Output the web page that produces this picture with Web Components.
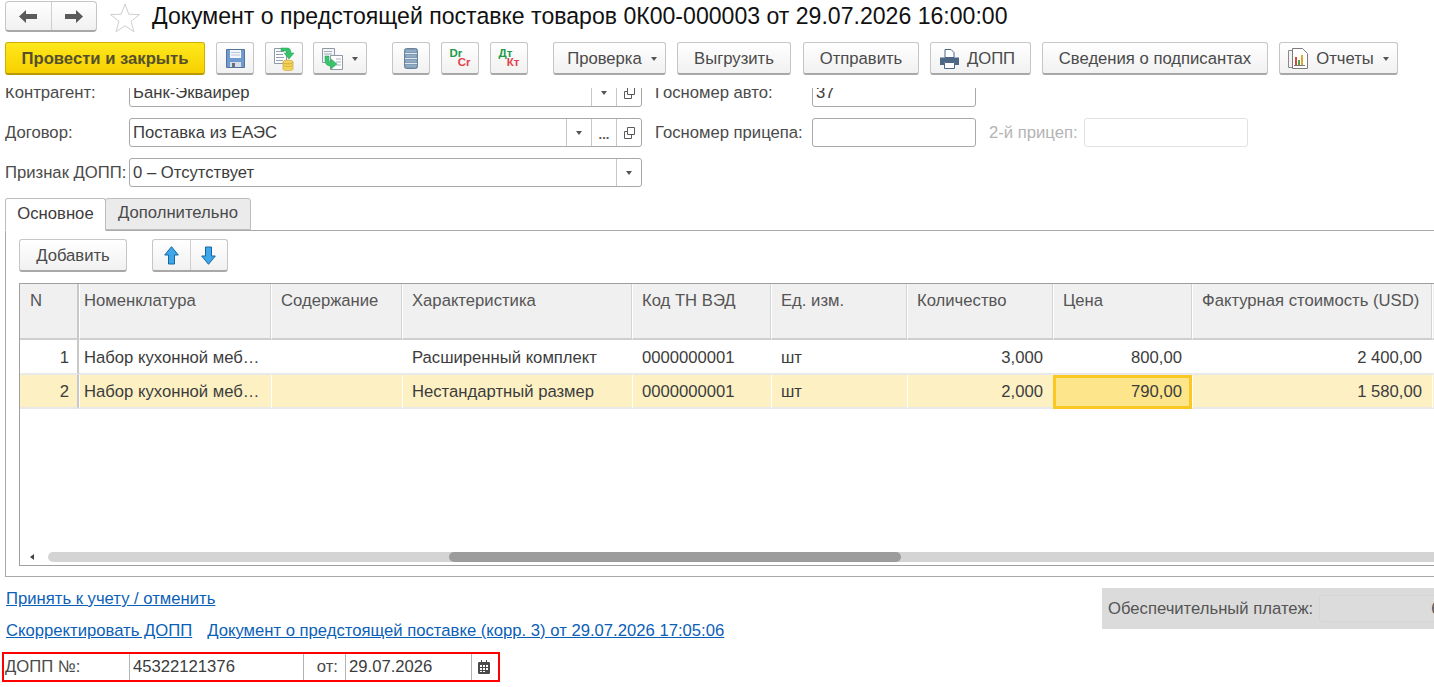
<!DOCTYPE html>
<html lang="ru">
<head>
<meta charset="utf-8">
<title>Документ о предстоящей поставке</title>
<style>
	html, body { margin: 0; background: #fff; overflow: hidden; }
	body { font: 16.67px "Liberation Sans", Arial, sans-serif; color: #4a4a4a; width: 1434px; height: 687px; }
</style>
</head>
<body>
<doc-header></doc-header>
<doc-form></doc-form>
<doc-panel></doc-panel>
<doc-footer></doc-footer>

<script>
const ICONS = {
	back: `<svg width="18" height="13" viewBox="0 0 18 13"><path fill="#5a5a5a" d="M0 6.5 7 0v4h11v5H7v4z"/></svg>`,
	forward: `<svg width="18" height="13" viewBox="0 0 18 13"><path fill="#5a5a5a" d="M18 6.5 11 0v4H0v5h11v4z"/></svg>`,
	star: `<svg width="30" height="29" viewBox="0 0 30 29"><path fill="#fff" stroke="#cfcfcf" d="M15 1l3.8 10.2 10.7.4-8.4 6.7 2.9 10.4L15 22.8l-9 5.9 2.9-10.4L.5 11.6l10.7-.4z"/></svg>`,
	save: `<svg width="19" height="19" viewBox="0 0 19 19"><path fill="#6f9bd0" stroke="#54739b" d="M.5.5h18v18H.5z"/><path fill="#f4f6f9" d="M4 1h11v8H4z"/><path fill="#b9c6d6" d="M5 3h9v1H5zM5 5.500h9v1H5z"/><path fill="#d7dde5" d="M4 13h11v5H4z"/><path fill="#5f6f84" d="M6 14h3v4H6z"/></svg>`,
	exportdb: `<svg width="21" height="24" viewBox="0 0 21 24"><path fill="#fff" stroke="#8f9aa6" d="M.5 1.500h12v15H.5z"/><path stroke="#93a0ae" d="M2 4.500h8M2 7.500h7M2 10.500h8M2 13.500h7"/><path fill="#35c46a" stroke="#21a053" stroke-width=".5" d="M7 1h6c3 0 4 2 4 5h3l-5 6-5-6h3c0-1-.5-2-2-2H7z"/><ellipse cx="14" cy="15" rx="5" ry="2" fill="#f4d35c" stroke="#c9a227" stroke-width=".6"/><path fill="#f4d35c" stroke="#c9a227" stroke-width=".6" d="M9 15v7c0 1 2 1.700 5 1.700s5-.7 5-1.700v-7c0 1-2 2-5 2s-5-1-5-2z"/><path stroke="#c9a227" fill="none" stroke-width=".6" d="M9 18c0 1 2 1.700 5 1.700s5-.7 5-1.700"/></svg>`,
	swap: `<svg width="21" height="22" viewBox="0 0 21 22"><path fill="#f3f5f7" stroke="#8f9aa6" d="M.5.500h12v14H.5z"/><path stroke="#a5afb9" d="M2 3.500h8M2 6h8"/><path fill="#fff" stroke="#8f9aa6" d="M8.500 7.500h12v14h-12z"/><path stroke="#a5afb9" d="M14 11h5M14 14h5M14 17h5"/><path fill="#3ac46e" stroke="#23a155" stroke-width=".5" d="M3 8h4v4c0 1 .5 1.500 2 1.500V11l6 5-6 5v-3c-4 0-6-2-6-6z"/></svg>`,
	db: `<svg width="14" height="21" viewBox="0 0 14 21"><rect x=".5" y=".5" width="13" height="20" rx="2" fill="#7f9bb7" stroke="#6b8299"/><path stroke="#dfe7ef" d="M1 5.500h12M1 10.500h12M1 15.500h12"/><path stroke="#a6bccf" d="M2 3h10M2 8h10M2 13h10M2 18h10"/></svg>`,
	printer: `<svg width="19" height="20" viewBox="0 0 19 20"><path fill="#fff" stroke="#4d6784" d="M5 .5h6l3 3v5H5z"/><path fill="#4d6784" d="M0 8.500h19V16h-4v-3H4v3H0z"/><path fill="#fff" stroke="#4d6784" d="M4.500 13.500h10v6h-10z"/></svg>`,
	report: `<svg width="20" height="21" viewBox="0 0 20 21"><path fill="#f2f2f2" stroke="#8b8b8b" d="M.5 2.500h4v17h-4z"/><path fill="#fff" stroke="#7b7b7b" d="M4.500.5h10l5 5v15h-15z"/><path fill="#d9483b" d="M7 9h2v8H7z"/><path fill="#47a64a" d="M10 12h2v5h-2z"/><path fill="#e0a92e" d="M13 7h2v10h-2z"/><path stroke="#777" d="M6 17.500h11"/></svg>`,
	up: `<svg width="15" height="19" viewBox="0 0 15 19"><path fill="#3ea6ea" stroke="#16679f" d="M7.500.7 14.300 9H10.500v9h-6V9H.7z"/></svg>`,
	down: `<svg width="15" height="19" viewBox="0 0 15 19"><path fill="#3ea6ea" stroke="#16679f" d="M7.500 18.300 14.300 10H10.500V1h-6v9H.7z"/></svg>`,
	open: `<svg width="11" height="12" viewBox="0 0 11 12"><path fill="none" stroke="#5a5a5a" d="M3.500.5h7v7h-7zM3.500 4.500h-3v7h7v-4"/></svg>`,
	cal: `<svg width="12" height="14" viewBox="0 0 12 14"><path fill="#4a4a4a" d="M1 2h2V0h1v2h4V0h1v2h2a1 1 0 0 1 1 1v10a1 1 0 0 1-1 1H1a1 1 0 0 1-1-1V3a1 1 0 0 1 1-1z"/><path fill="#fff" d="M2 5h2v2H2zM5 5h2v2H5zM8 5h2v2H8zM2 8h2v2H2zM5 8h2v2H5zM8 8h2v2H8zM2 11h2v1H2zM5 11h2v1H5z"/></svg>`,
};

const TRIANGLE = `<svg width="6" height="4" viewBox="0 0 6 4"><path fill="#555" d="M0 0h6L3 4z"/></svg>`;

class XIcon extends HTMLElement {
	constructor() {
		super();
		this.attachShadow({ mode: 'open' });
	}

	connectedCallback() {
		this.shadowRoot.innerHTML = `
			<style>
				:host { display: inline-flex; align-items: center; justify-content: center; }
				svg { display: block; }
			</style>
			${ICONS[this.getAttribute('name')] || ''}
		`;
	}
}

class XBtn extends HTMLElement {
	constructor() {
		super();
		this.attachShadow({ mode: 'open' });
	}

	connectedCallback() {
		const drop = this.hasAttribute('drop') ? `<span class="tri">${TRIANGLE}</span>` : '';
		this.shadowRoot.innerHTML = `
			<style>
				:host {
					display: inline-flex;
					align-items: center;
					justify-content: center;
					box-sizing: border-box;
					height: 33px;
					flex: none;
					border: 1px solid #c6c6c6;
					border-bottom: 2px solid #a8a8a8;
					border-radius: 3px;
					background: linear-gradient(#ffffff, #f1f1f1);
					color: #4a4a4a;
					gap: 8px;
					padding-top: 1px;
					white-space: nowrap;
				}
				:host([primary]) {
					border-color: #d2ae00;
					border-bottom-color: #b99a00;
					background: linear-gradient(#ffe81c, #f6d000);
					color: #55502a;
					font-weight: bold;
				}
				.tri { display: inline-flex; margin-left: 1px; }
			</style>
			<slot></slot>${drop}
		`;
	}
}

class XField extends HTMLElement {
	constructor() {
		super();
		this.attachShadow({ mode: 'open' });
	}

	connectedCallback() {
		const btns = (this.getAttribute('buttons') || '').split(' ').filter(Boolean).map(b => {
			if (b === 'drop') return `<span class="b">${TRIANGLE}</span>`;
			if (b === 'dots') return `<span class="b dots">...</span>`;
			return `<span class="b">${ICONS.open}</span>`;
		}).join('');
		this.shadowRoot.innerHTML = `
			<style>
				:host {
					display: flex;
					box-sizing: border-box;
					height: 29px;
					flex: none;
					border: 1px solid #a8a8a8;
					border-radius: 3px;
					background: #fff;
					color: #3c3c3c;
				}
				:host([disabled]) { border-color: #e2e2e2; }
				.v { flex: 1; padding-left: 3px; line-height: 27px; white-space: nowrap; overflow: hidden; }
				.b {
					width: 25px;
					flex: none;
					display: flex;
					align-items: center;
					justify-content: center;
					border-left: 1px solid #c8c8c8;
					box-sizing: border-box;
				}
				.dots { font-weight: bold; color: #555; font-size: 13px; padding-top: 4px; }
			</style>
			<div class="v"><slot></slot></div>${btns}
		`;
	}
}

class DocHeader extends HTMLElement {
	constructor() {
		super();
		this.attachShadow({ mode: 'open' });
		this.shadowRoot.innerHTML = `
			<style>
				:host { display: block; height: 88px; box-sizing: border-box; padding: 1px 0 0 5px; background: #fff; }
				.top { display: flex; align-items: center; height: 31px; }
				.nav {
					display: flex;
					box-sizing: border-box;
					width: 92px;
					height: 31px;
					border: 1px solid #c6c6c6;
					border-bottom: 2px solid #a8a8a8;
					border-radius: 4px;
					background: linear-gradient(#fff, #f1f1f1);
				}
				.nav x-icon { flex: 1; }
				.nav x-icon + x-icon { border-left: 1px solid #cfcfcf; }
				.star { margin-left: 13px; margin-top: 1px; }
				h1 { margin: 0 0 0 12px; font: normal 23.08px "Liberation Sans", Arial, sans-serif; color: #111; white-space: nowrap; }
				.bar { display: flex; margin-top: 10px; }
				.m25 { margin-left: 25px; }
				.m12 { margin-left: 12px; }
				.m11 { margin-left: 11px; }
				.m10 { margin-left: 10px; }
				.dc { display: flex; flex-direction: column; font: bold 11.5px/9px "Liberation Sans", Arial, sans-serif; width: 21px; margin-top: -2px; }
				.dc b:first-child { color: #1f9a4a; }
				.dc b:last-child { color: #e4404a; align-self: flex-end; }
			</style>
			<div class="top">
				<div class="nav"><x-icon name="back"></x-icon><x-icon name="forward"></x-icon></div>
				<x-icon class="star" name="star"></x-icon>
				<h1>Документ о предстоящей поставке товаров 0К00-000003 от 29.07.2026 16:00:00</h1>
			</div>
			<div class="bar">
				<x-btn primary style="width:200px">Провести и закрыть</x-btn>
				<x-btn class="m11" style="width:38px"><x-icon name="save"></x-icon></x-btn>
				<x-btn class="m11" style="width:38px"><x-icon name="exportdb"></x-icon></x-btn>
				<x-btn class="m10" drop style="width:54px"><x-icon name="swap"></x-icon></x-btn>
				<x-btn class="m25" style="width:38px"><x-icon name="db"></x-icon></x-btn>
				<x-btn class="m11" style="width:38px"><span class="dc"><b>Dr</b><b>Cr</b></span></x-btn>
				<x-btn class="m11" style="width:38px"><span class="dc"><b>Дт</b><b>Кт</b></span></x-btn>
				<x-btn class="m25" drop style="width:113px;padding-left:5px">Проверка</x-btn>
				<x-btn class="m11" style="width:114px">Выгрузить</x-btn>
				<x-btn class="m12" style="width:116px">Отправить</x-btn>
				<x-btn class="m11" style="width:101px;padding-right:6px"><x-icon name="printer"></x-icon>ДОПП</x-btn>
				<x-btn class="m11" style="width:226px">Сведения о подписантах</x-btn>
				<x-btn class="m11" drop style="width:119px"><x-icon name="report"></x-icon>Отчеты</x-btn>
			</div>
		`;
	}
}

class DocForm extends HTMLElement {
	constructor() {
		super();
		this.attachShadow({ mode: 'open' });
		this.shadowRoot.innerHTML = `
			<style>
				:host { display: block; padding-left: 5px; }
				.row { display: flex; align-items: center; height: 29px; margin-bottom: 11px; white-space: nowrap; }
				.clip { height: 19px; overflow: hidden; align-items: flex-end; }
				.l { width: 124px; flex: none; line-height: 28px; }
				.l2 { margin-left: 13px; width: 157px; flex: none; line-height: 28px; }
				.l3 { margin-left: 13px; width: 95px; flex: none; color: #b4b4b4; line-height: 28px; }
			</style>
			<div class="row clip">
				<span class="l">Контрагент:</span>
				<x-field buttons="drop open" style="width:513px">Банк-Эквайрер</x-field>
				<span class="l2">Госномер авто:</span>
				<x-field style="width:164px">37</x-field>
			</div>
			<div class="row">
				<span class="l">Договор:</span>
				<x-field buttons="drop dots open" style="width:513px">Поставка из ЕАЭС</x-field>
				<span class="l2">Госномер прицепа:</span>
				<x-field style="width:164px"></x-field>
				<span class="l3">2-й прицеп:</span>
				<x-field disabled style="width:164px"></x-field>
			</div>
			<div class="row">
				<span class="l">Признак ДОПП:</span>
				<x-field buttons="drop" style="width:513px">0 – Отсутствует</x-field>
			</div>
		`;
	}
}

class DocTable extends HTMLElement {
	constructor() {
		super();
		this.attachShadow({ mode: 'open' });
		const head = ['N', 'Номенклатура', 'Содержание', 'Характеристика', 'Код ТН ВЭД', 'Ед. изм.', 'Количество', 'Цена', 'Фактурная стоимость (USD)', ''];
		const rows = [
			['1', 'Набор кухонной меб…', '', 'Расширенный комплект', '0000000001', 'шт', '3,000', '800,00', '2 400,00', ''],
			['2', 'Набор кухонной меб…', '', 'Нестандартный размер', '0000000001', 'шт', '2,000', '790,00', '1 580,00', ''],
		];
		const right = [0, 6, 7, 8];
		const cell = (text, i, r) => {
			const cls = ['c'];
			if (i === 0) cls.push('first');
			if (i === 1) cls.push('name');
			if (right.includes(i)) cls.push('r');
			if (r === 0) cls.push('top');
			if (r === 1) cls.push('cur');
			if (r === 1 && i === 7) cls.push('sel');
			return `<div class="${cls.join(' ')}">${text}</div>`;
		};
		this.shadowRoot.innerHTML = `
			<style>
				:host {
					display: flex;
					flex-direction: column;
					box-sizing: border-box;
					height: 283px;
					margin-left: 13px;
					border: 1px solid #a0a0a0;
					border-right: 0;
					overflow: hidden;
					color: #3c3c3c;
				}
				.grid {
					display: grid;
					grid-template-columns: 59px 192px 131px 230px 139px 136px 146px 139px 240px 100px;
					grid-template-rows: 56px 35px 34px;
				}
				.h {
					background: #f0f0f0;
					color: #555;
					padding: 7px 0 0 9px;
					border-right: 1px solid #d4d4d4;
					border-left: 1px solid #fff;
					border-bottom: 2px solid #cfcfcf;
					box-sizing: border-box;
					white-space: nowrap;
				}
				.h.first { border-left: 0; border-right: 2px solid #c8c8c8; padding-left: 10px; }
				.h.name { padding-left: 4px; }
				.c {
					box-sizing: border-box;
					padding: 1px 10px 0;
					display: flex;
					align-items: center;
					border-bottom: 2px solid #e9e9e9;
					white-space: nowrap;
					overflow: hidden;
				}
				.c.top { padding-top: 3px; }
				.c.name { padding-left: 5px; }
				.c.first { border-right: 2px solid #c8c8c8; padding-right: 8px; }
				.c.r { justify-content: flex-end; }
				.c.cur { background: #fdf1c4; background-clip: padding-box; border-left: 1px solid #fff; padding-left: 9px; }
				.c.cur.name { padding-left: 4px; }
				.c.cur.first { border-left: 0; }
				.c.sel { background: #fde58c; outline: 3px solid #fbc722; outline-offset: -3px; }
				.rest { flex: 1; }
				.scroll { display: flex; align-items: center; height: 10px; margin-bottom: 3px; padding-left: 10px; }
				.arrow { width: 0; height: 0; border: 3px solid transparent; border-right: 4px solid #444; border-left: 0; margin-right: 14px; }
				.track { flex: 1; height: 10px; background: #d4d4d4; border-radius: 5px 0 0 5px; display: flex; }
				.thumb { width: 452px; margin-left: 401px; height: 10px; border-radius: 5px; background: #9c9c9c; }
			</style>
			<div class="grid">
				${head.map((t, i) => `<div class="h${i === 0 ? ' first' : ''}${i === 1 ? ' name' : ''}">${t}</div>`).join('')}
				${rows.map((row, r) => row.map((t, i) => cell(t, i, r)).join('')).join('')}
			</div>
			<div class="rest"></div>
			<div class="scroll"><span class="arrow"></span><div class="track"><div class="thumb"></div></div></div>
		`;
	}
}

class DocPanel extends HTMLElement {
	constructor() {
		super();
		this.attachShadow({ mode: 'open' });
		this.shadowRoot.innerHTML = `
			<style>
				:host { display: block; margin-left: 5px; }
				.tabs { display: flex; height: 33px; position: relative; z-index: 1; margin-bottom: -1px; }
				.tab {
					box-sizing: border-box;
					display: flex;
					align-items: center;
					justify-content: center;
					border: 1px solid #bdbdbd;
					border-radius: 3px 3px 0 0;
					padding-bottom: 2px;
				}
				.on { width: 101px; background: #fff; border-bottom-color: #fff; color: #3c3c3c; }
				.off { width: 146px; height: 32px; margin-left: -1px; background: #ebebeb; }
				.body {
					box-sizing: border-box;
					height: 347px;
					border: 1px solid #aaa;
					border-right: 0;
					overflow: hidden;
				}
				.cmd { display: flex; padding: 8px 0 0 13px; height: 44px; box-sizing: content-box; }
				.pair { display: flex; margin-left: 25px; height: 33px; box-sizing: border-box; width: 76px; border: 1px solid #c6c6c6; border-bottom: 2px solid #a8a8a8; border-radius: 3px; background: linear-gradient(#fff, #f1f1f1); }
				.pair x-icon { flex: 1; }
				.pair x-icon + x-icon { border-left: 1px solid #cfcfcf; }
			</style>
			<div class="tabs">
				<div class="tab on">Основное</div>
				<div class="tab off">Дополнительно</div>
			</div>
			<div class="body">
				<div class="cmd">
					<x-btn style="width:108px">Добавить</x-btn>
					<div class="pair"><x-icon name="up"></x-icon><x-icon name="down"></x-icon></div>
				</div>
				<doc-table></doc-table>
			</div>
		`;
	}
}

class DocFooter extends HTMLElement {
	constructor() {
		super();
		this.attachShadow({ mode: 'open' });
		this.shadowRoot.innerHTML = `
			<style>
				:host { display: flex; justify-content: space-between; }
				.left { padding: 12px 0 0 6px; }
				.links { display: flex; height: 20px; line-height: 20px; margin-bottom: 12px; gap: 15px; }
				.links + .links { margin-bottom: 11px; }
				a { color: #0b5fb8; text-decoration: underline; white-space: nowrap; }
				.red {
					display: flex;
					box-sizing: border-box;
					width: 498px;
					height: 30px;
					margin-left: -4px;
					border: 2px solid #f00;
					line-height: 25px;
					color: #3c3c3c;
				}
				.lab { width: 125px; padding-left: 1px; box-sizing: border-box; color: #4a4a4a; }
				.val { box-sizing: border-box; padding-left: 3px; border-left: 1px solid #b4b4b4; border-right: 1px solid #b4b4b4; }
				.num { width: 175px; }
				.ot { width: 41px; box-sizing: border-box; text-align: right; padding-right: 7px; color: #4a4a4a; }
				.dt { width: 127px; }
				.cal { flex: 1; padding-right: 2px; }
				.grey {
					display: flex;
					align-items: center;
					box-sizing: border-box;
					width: 332px;
					height: 41px;
					margin-top: 11px;
					padding-left: 6px;
					background: #dbdbdb;
					overflow: hidden;
					white-space: nowrap;
					color: #555;
				}
				.sum {
					flex: none;
					box-sizing: border-box;
					width: 140px;
					height: 27px;
					margin-left: 6px;
					padding-left: 111px;
					line-height: 25px;
					background: #dcdcdc;
					border: 1px solid #d5d5d5;
					border-radius: 3px;
				}
			</style>
			<div class="left">
				<div class="links"><a>Принять к учету / отменить</a></div>
				<div class="links"><a>Скорректировать ДОПП</a><a>Документ о предстоящей поставке (корр. 3) от 29.07.2026 17:05:06</a></div>
				<div class="red">
					<span class="lab">ДОПП №:</span>
					<span class="val num">45322121376</span>
					<span class="ot">от:</span>
					<span class="val dt">29.07.2026</span>
					<x-icon class="cal" name="cal"></x-icon>
				</div>
			</div>
			<div class="grey">Обеспечительный платеж:<div class="sum">6</div></div>
		`;
	}
}

customElements.define('x-icon', XIcon);
customElements.define('x-btn', XBtn);
customElements.define('x-field', XField);
customElements.define('doc-header', DocHeader);
customElements.define('doc-form', DocForm);
customElements.define('doc-table', DocTable);
customElements.define('doc-panel', DocPanel);
customElements.define('doc-footer', DocFooter);
</script>
</body>
</html>
